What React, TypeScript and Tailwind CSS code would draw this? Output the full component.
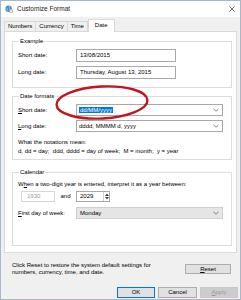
import React from 'react';

const font = { fontFamily: '"Liberation Sans", Arial, sans-serif' };

const Chevron: React.FC = () => (
  <svg width="6" height="4" viewBox="0 0 6 4" className="shrink-0">
    <path d="M0.5 0.8 L3 3.2 L5.5 0.8" fill="none" stroke="#666" strokeWidth="0.8" />
  </svg>
);

const Combo: React.FC<{ value: React.ReactNode }> = ({ value }) => (
  <div className="flex h-[12px] w-[147px] items-center justify-between border border-[#a8a8a8] bg-white pl-[2px] pr-[3px]">
    <span className="leading-[8px]">{value}</span>
    <Chevron />
  </div>
);

const Field: React.FC<{ value: string; disabled?: boolean }> = ({ value, disabled }) => (
  <div
    className={
      'flex h-[13px] w-[100px] items-center border bg-white pl-[3px] ' +
      (disabled ? 'border-[#d6d6d6] text-[#9a9a9a]' : 'border-[#a8a8a8] text-black')
    }
  >
    {value}
  </div>
);

const Group: React.FC<{ title: string; className?: string; children: React.ReactNode }> = ({ title, className, children }) => (
  <fieldset className={'border border-[#dcdcdc] pl-[5px] ' + (className || '')}>
    <legend className="ml-[1px] px-[1px] leading-[8px]">{title}</legend>
    {children}
  </fieldset>
);

export default function App() {
  return (
    <div style={font} className="relative flex h-[300px] w-[241px] flex-col border border-[#a6b8cc] bg-[#f0f0f0] text-[6px] text-black">
      {/* title bar */}
      <div className="flex h-[16px] items-center justify-between bg-white pl-[4px] pr-[5px]">
        <div className="flex items-center gap-[4px]">
          <svg width="8" height="8" viewBox="0 0 8 8">
            <circle cx="3.6" cy="3.8" r="3.2" fill="#3c8fd6" />
            <path d="M1.2 2.5 Q3 3.6 2.4 5.6 M4 1 Q5.2 3 4.4 6.6" fill="none" stroke="#9fd0f4" strokeWidth="0.7" />
            <circle cx="6" cy="5.8" r="1.8" fill="#e8e8e8" stroke="#777" strokeWidth="0.5" />
          </svg>
          <span className="text-[6.5px] text-[#222]">Customize Format</span>
        </div>
        <svg width="6" height="6" viewBox="0 0 6 6">
          <path d="M0.5 0.5 L5.5 5.5 M5.5 0.5 L0.5 5.5" stroke="#333" strokeWidth="0.7" />
        </svg>
      </div>

      {/* tabs */}
      <div className="flex h-[14px] items-end pl-[3px]">
        <div className="flex h-[10px] items-center border border-b-0 border-[#d9d9d9] px-[3px]">Numbers</div>
        <div className="flex h-[10px] items-center border border-b-0 border-l-0 border-[#d9d9d9] px-[3px]">Currency</div>
        <div className="flex h-[10px] items-center border border-b-0 border-l-0 border-[#d9d9d9] px-[3px]">Time</div>
        <div className="relative z-10 -mb-px flex h-[13px] items-center border border-b-0 border-[#d9d9d9] bg-white px-[6px] pb-[2px]">Date</div>
      </div>

      {/* tab panel */}
      <div className="mx-[3px] flex h-[222px] flex-col border border-[#d9d9d9] bg-white pl-[7px] pr-[4px] pt-[5px]">
        <Group title="Example" className="pb-[8px]">
          <div className="mt-[4px] flex items-center">
            <span className="w-[58px]">Short date:</span>
            <Field value="13/08/2015" />
          </div>
          <div className="mt-[4px] flex items-center">
            <span className="w-[58px]">Long date:</span>
            <Field value="Thursday, August 13, 2015" />
          </div>
        </Group>

        <Group title="Date formats" className="mt-[4px] pb-[3px]">
          <div className="mt-[4px] flex items-center">
            <span className="w-[58px]"><u>S</u>hort date:</span>
            <Combo value={<span className="bg-[#0078d7] px-[1px] text-white">dd/MM/yyyy</span>} />
          </div>
          <div className="mt-[4px] flex items-center">
            <span className="w-[58px]"><u>L</u>ong date:</span>
            <Combo value="dddd, MMMM d, yyyy" />
          </div>
          <div className="mt-[6px] leading-[9px]">
            <div>What the notations mean:</div>
            <div>d, dd = day;&nbsp; ddd, dddd = day of week;&nbsp; M = month;&nbsp; y = year</div>
          </div>
        </Group>

        <Group title="Calendar" className="mt-[8px] pb-[26px]">
          <div className="mt-[4px] leading-[8px]">
            W<u>h</u>en a two-digit year is entered, interpret it as a year between:
          </div>
          <div className="mt-[3px] flex items-center pl-[3px]">
            <div className="flex h-[11px] w-[34px] items-center border border-[#d6d6d6] pl-[5px] text-[#9a9a9a]">1930</div>
            <span className="w-[21px] text-center">and</span>
            <div className="flex h-[11px] w-[34px] items-center justify-between border border-[#a8a8a8] pl-[3px]">
              <span>2029</span>
              <div className="flex h-full w-[6px] flex-col items-center justify-center gap-[1px] border-l border-[#d0d0d0]">
                <svg width="4" height="3" viewBox="0 0 4 3"><path d="M0 3 L2 0.5 L4 3 Z" fill="#444" /></svg>
                <svg width="4" height="3" viewBox="0 0 4 3"><path d="M0 0 L2 2.5 L4 0 Z" fill="#444" /></svg>
              </div>
            </div>
          </div>
          <div className="mt-[5px] flex items-center">
            <span className="w-[58px]"><u>F</u>irst day of week:</span>
            <div className="flex h-[12px] w-[147px] items-center justify-between border border-[#cfcfcf] bg-[#e5e5e5] pl-[3px] pr-[3px]">
              <span>Monday</span>
              <Chevron />
            </div>
          </div>
        </Group>
      </div>

      {/* bottom area */}
      <div className="pt-[9px]">
        <div className="flex items-center justify-between pl-[11px] pr-[9px]">
          <div className="leading-[7px]">
            <div>Click Reset to restore the system default settings for</div>
            <div>numbers, currency, time, and date.</div>
          </div>
          <div className="flex h-[10px] w-[46px] items-center justify-center border border-[#adadad] bg-[#e1e1e1]">
            <u>R</u>eset
          </div>
        </div>
        <div className="mt-[11px] flex justify-end gap-[3px] pr-[2px]">
          <div className="flex h-[11px] w-[38px] items-center justify-center border border-[#0078d7] bg-[#e1e1e1]">OK</div>
          <div className="flex h-[11px] w-[39px] items-center justify-center border border-[#adadad] bg-[#e1e1e1]">Cancel</div>
          <div className="flex h-[11px] w-[38px] items-center justify-center border border-[#c8c8c8] bg-[#cccccc] text-[#9a9a9a]"><u>A</u>pply</div>
        </div>
      </div>

      {/* red annotation circle */}
      <svg className="pointer-events-none absolute left-[52px] top-[82px]" width="100" height="40" viewBox="0 0 100 40">
        <ellipse cx="49" cy="19.5" rx="45.5" ry="16" fill="none" stroke="#c0161d" strokeWidth="2.4" transform="rotate(-3 49 19.5)" />
      </svg>
    </div>
  );
}
